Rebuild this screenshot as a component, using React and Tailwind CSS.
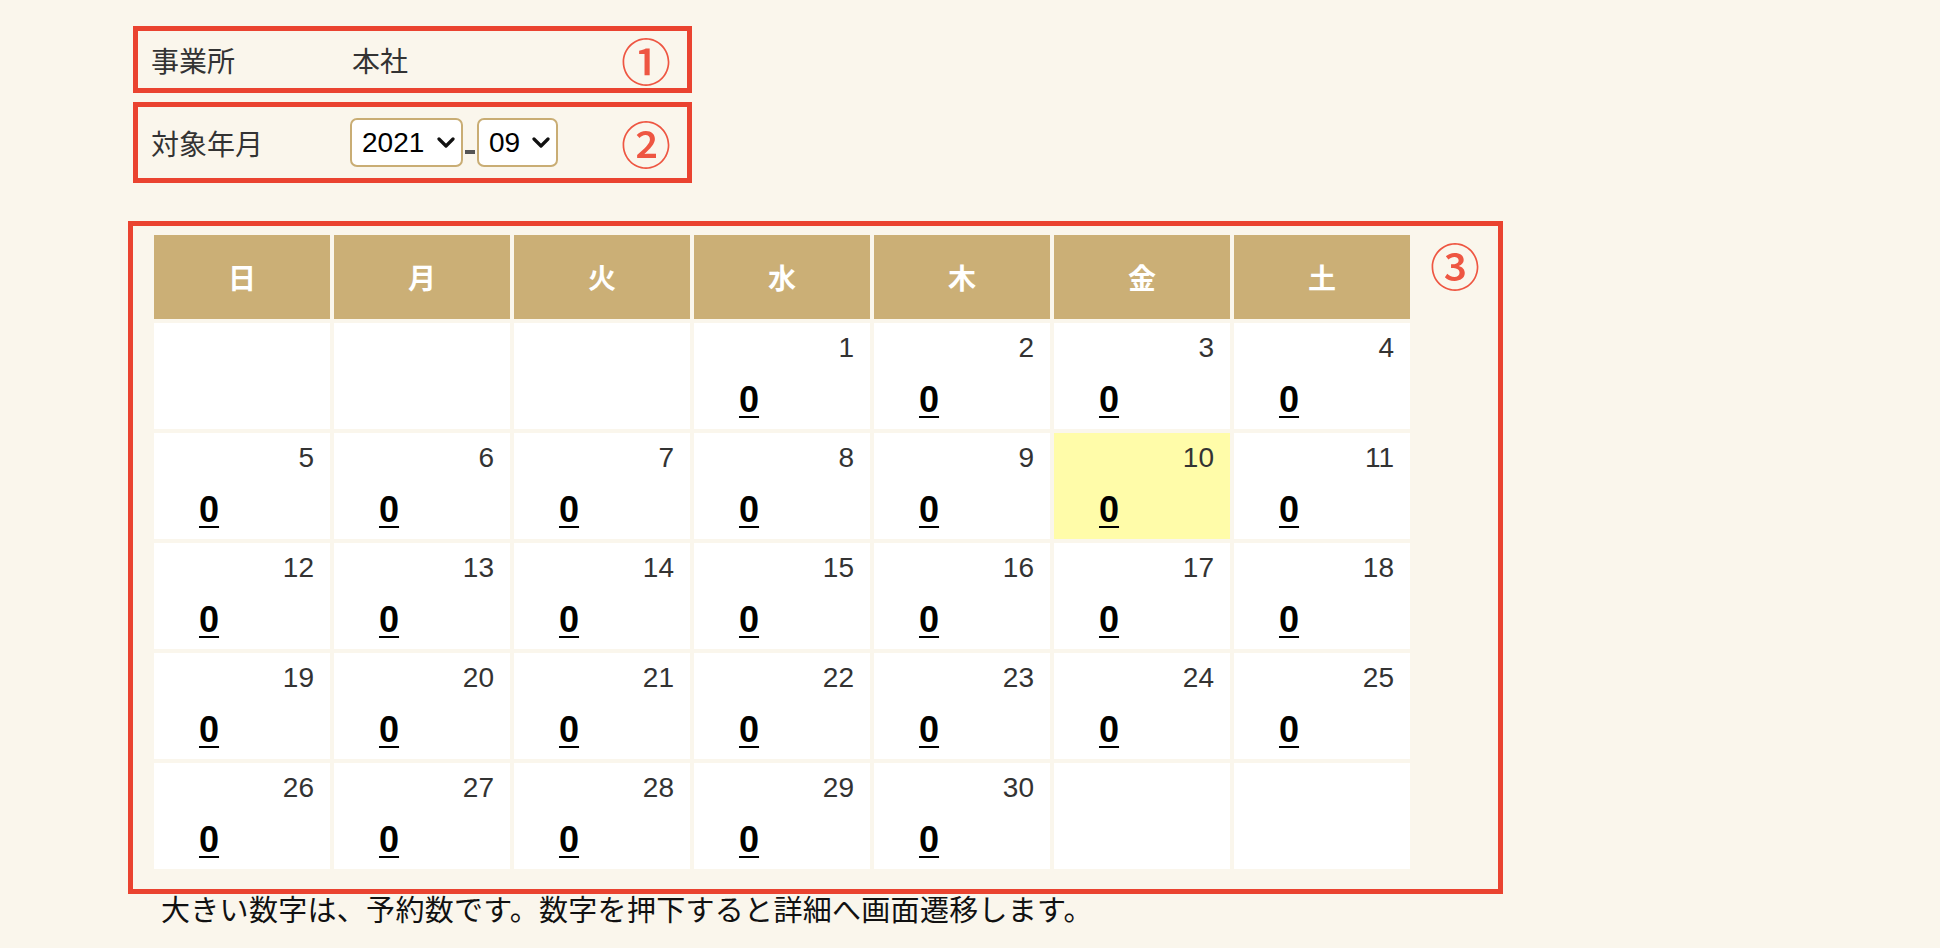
import React from 'react';

const WEEK = ['日', '月', '火', '水', '木', '金', '土'];
const JP = { fontFamily: '"Noto Sans CJK JP", "Noto Sans", sans-serif' };
const LAT = { fontFamily: '"Liberation Sans", Arial, sans-serif' };

// September 2021 starts on a Wednesday
const cells = [...Array(3).fill(null), ...Array.from({ length: 30 }, (_, i) => i + 1), null, null];

function Chevron() {
  return (
    <svg width="18" height="11" viewBox="0 0 18 11" className="absolute right-[8px] top-[19px] pointer-events-none">
      <path d="M2 2 L9 9 L16 2" fill="none" stroke="#111" strokeWidth="3.2" strokeLinecap="round" strokeLinejoin="round" />
    </svg>
  );
}

function MonthSelect({ value, options, width }) {
  return (
    <div className="relative" style={{ width }}>
      <select
        defaultValue={value}
        className="appearance-none w-full h-[49px] bg-white border-2 border-[#c9ad74] rounded-[7px] pl-[10px] text-[28px] text-black outline-none"
        style={LAT}
      >
        {options.map((o) => (
          <option key={o} value={o}>{o}</option>
        ))}
      </select>
      <Chevron />
    </div>
  );
}

function Circled({ children }) {
  return (
    <span className="text-[50px] leading-none text-[#ee5642] font-medium" style={JP}>
      {children}
    </span>
  );
}

export default function App() {
  return (
    <div className="min-h-screen bg-[#faf6ec] pl-[128px] pt-[26px]" style={JP}>
      {/* ① office */}
      <div className="ml-[5px] w-[559px] h-[67px] border-[5px] border-[#ea4330] flex items-center pl-[13px] pr-[16px]">
        <span className="w-[201px] text-[28px] text-[#333]">事業所</span>
        <span className="text-[28px] text-[#333]">本社</span>
        <span className="ml-auto"><Circled>①</Circled></span>
      </div>

      {/* ② target month */}
      <div className="ml-[5px] mt-[9px] w-[559px] h-[81px] border-[5px] border-[#ea4330] flex items-center pl-[13px] pr-[16px]">
        <span className="w-[199px] text-[28px] text-[#333]">対象年月</span>
        <MonthSelect value="2021" options={['2019', '2020', '2021', '2022']} width={113} />
        <span className="w-[14px] flex justify-center">
          <span className="block w-[10px] h-[4px] bg-[#555] mt-[18px]" />
        </span>
        <MonthSelect value="09" options={['01', '02', '03', '04', '05', '06', '07', '08', '09', '10', '11', '12']} width={81} />
        <span className="ml-auto"><Circled>②</Circled></span>
      </div>

      {/* ③ calendar */}
      <div className="mt-[38px] w-[1375px] border-[5px] border-[#ea4330] pt-[9px] pl-[21px] pb-[20px] flex">
        <div className="grid grid-cols-[repeat(7,176px)] gap-[4px]">
          {WEEK.map((d) => (
            <div key={d} className="h-[84px] bg-[#cbaf76] flex items-center justify-center text-white font-bold text-[28px]">
              {d}
            </div>
          ))}
          {cells.map((day, i) => (
            <div
              key={i}
              className={`h-[106px] pt-[9px] pr-[16px] ${day === 10 ? 'bg-[#fffca9]' : 'bg-white'}`}
              style={LAT}
            >
              {day && (
                <>
                  <div className="text-right text-[28px] leading-[32px] text-[#333]">{day}</div>
                  <div className="pl-[45px] mt-[16px] text-[36px] leading-[40px] font-bold">
                    <a href="#" className="text-black underline decoration-2 underline-offset-[4px]">0</a>
                  </div>
                </>
              )}
            </div>
          ))}
        </div>
        <div className="ml-[20px] mt-[4px]"><Circled>③</Circled></div>
      </div>

      <p className="pl-[33px] text-[29px] leading-[28px] tracking-[0.3px] text-[#111]">
        大きい数字は、予約数です。数字を押下すると詳細へ画面遷移します。
      </p>
    </div>
  );
}
